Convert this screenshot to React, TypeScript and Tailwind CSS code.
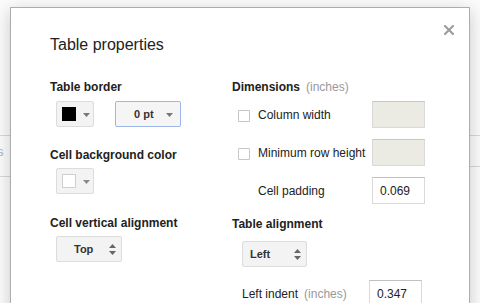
import React from "react";

const font = { fontFamily: '"Liberation Sans", Arial, sans-serif' };

function DownArrow({ color = "#777" }: { color?: string }) {
  return (
    <svg width="7" height="4" viewBox="0 0 7 4">
      <polygon points="0,0 7,0 3.5,4" fill={color} />
    </svg>
  );
}

function Spinner() {
  return (
    <svg width="7" height="11" viewBox="0 0 7 11">
      <polygon points="0,4 3.5,0 7,4" fill="#666" />
      <polygon points="0,7 7,7 3.5,11" fill="#666" />
    </svg>
  );
}

function SelectButton({
  label,
  pl,
  w,
}: {
  label: string;
  pl: string;
  w: string;
}) {
  return (
    <div
      className={`flex h-[26px] items-center justify-between rounded-[2px] border border-[#dcdcdc] bg-[#f3f3f3] pr-[5px] text-[11px] font-bold text-[#333] ${pl} ${w}`}
    >
      <span>{label}</span>
      <Spinner />
    </div>
  );
}

export default function App() {
  return (
    <div
      className="relative h-[303px] w-[480px] overflow-hidden bg-[#fbfbfb]"
      style={font}
    >
      {/* background page behind the dialog */}
      <div className="absolute left-0 top-[135px] h-px w-full bg-[#d8d8d8]" />
      <div className="absolute left-0 top-[176px] h-px w-[12px] bg-[#d8d8d8]" />
      <div className="absolute right-0 top-[166px] h-px w-[12px] bg-[#d8d8d8]" />
      <span className="absolute left-[-3px] top-[144px] text-[13px] leading-[15px] text-[#aab4c4]">
        s
      </span>

      {/* dialog */}
      <div className="absolute left-[10px] top-[7px] h-[320px] w-[460px] border border-[#acacac] bg-white pl-[39px] pt-[27px] shadow-[0_4px_16px_rgba(0,0,0,0.2)]">
        <button className="absolute right-[15px] top-[17px] flex h-[10px] w-[10px] items-center justify-center">
          <svg width="10" height="10" viewBox="0 0 10 10">
            <path
              d="M1 1 L9 9 M9 1 L1 9"
              stroke="#9a9a9a"
              strokeWidth="2"
              strokeLinecap="square"
            />
          </svg>
        </button>

        <div className="text-[16px] leading-[20px] text-[#222]">
          Table properties
        </div>

        <div className="mt-[25px] flex">
          {/* left column */}
          <div className="flex w-[182px] flex-col">
            <div className="text-[12px] font-bold leading-[15px] text-[#222]">
              Table border
            </div>
            <div className="mt-[6px] flex items-center">
              <div className="ml-[6px] flex h-[26px] w-[38px] items-center rounded-[2px] border border-[#dcdcdc] bg-[#f3f3f3] pl-[5px]">
                <div className="h-[14px] w-[14px] bg-black" />
                <div className="ml-[7px] mt-[1px]">
                  <DownArrow />
                </div>
              </div>
              <div className="ml-[21px] flex h-[26px] w-[66px] items-center justify-between rounded-[2px] border border-[#9db7ec] bg-[#f5f5f5] pl-[18px] pr-[7px] text-[11px] font-bold text-[#333]">
                <span>0 pt</span>
                <div className="mt-[1px]">
                  <DownArrow />
                </div>
              </div>
            </div>

            <div className="mt-[21px] text-[12px] font-bold leading-[15px] text-[#222]">
              Cell background color
            </div>
            <div className="ml-[6px] mt-[5px] flex h-[26px] w-[38px] items-center rounded-[2px] border border-[#dcdcdc] bg-[#f3f3f3] pl-[5px]">
              <div className="h-[14px] w-[14px] border border-[#cfcfcf] bg-white" />
              <div className="ml-[7px] mt-[1px]">
                <DownArrow color="#8a8a8a" />
              </div>
            </div>

            <div className="mt-[22px] text-[12px] font-bold leading-[15px] text-[#222]">
              Cell vertical alignment
            </div>
            <div className="ml-[6px] mt-[5px]">
              <SelectButton label="Top" pl="pl-[17px]" w="w-[66px]" />
            </div>
          </div>

          {/* right column */}
          <div className="flex flex-col">
            <div className="text-[12px] leading-[15px] text-[#222]">
              <span className="font-bold">Dimensions</span>
              <span className="ml-[6px] text-[#999]">(inches)</span>
            </div>

            <div className="mt-[6px] flex h-[27px] items-center">
              <div className="flex w-[140px] items-center pl-[6px]">
                <div className="mt-[3px] h-[12px] w-[12px] rounded-[1px] border border-[#c6c6c6] bg-white" />
                <span className="ml-[8px] text-[12px] text-[#222]">
                  Column width
                </span>
              </div>
              <div className="h-[27px] w-[53px] border border-[#d9d9d9] border-t-[#c8c8c8] bg-[#ebebe4]" />
            </div>

            <div className="mt-[11px] flex h-[27px] items-center">
              <div className="flex w-[140px] items-center pl-[6px]">
                <div className="mt-[2px] h-[12px] w-[12px] rounded-[1px] border border-[#c6c6c6] bg-white" />
                <span className="ml-[8px] text-[12px] text-[#222]">
                  Minimum row height
                </span>
              </div>
              <div className="h-[27px] w-[53px] border border-[#d9d9d9] border-t-[#c8c8c8] bg-[#ebebe4]" />
            </div>

            <div className="mt-[11px] flex h-[27px] items-center">
              <div className="flex w-[140px] items-center pl-[26px]">
                <span className="text-[12px] text-[#222]">Cell padding</span>
              </div>
              <div className="flex h-[27px] w-[53px] items-center border border-[#d9d9d9] border-t-[#c0c0c0] bg-white pl-[7px] text-[12px] text-[#222]">
                0.069
              </div>
            </div>

            <div className="mt-[13px] text-[12px] font-bold leading-[15px] text-[#222]">
              Table alignment
            </div>
            <div className="ml-[10px] mt-[9px]">
              <SelectButton label="Left" pl="pl-[7px]" w="w-[65px]" />
            </div>

            <div className="mt-[13px] flex h-[27px] items-center">
              <div className="flex w-[137px] items-center pl-[10px] text-[12px]">
                <span className="text-[#222]">Left indent</span>
                <span className="ml-[6px] text-[#999]">(inches)</span>
              </div>
              <div className="flex h-[27px] w-[53px] items-center border border-[#d9d9d9] border-t-[#c0c0c0] bg-white pl-[7px] text-[12px] text-[#222]">
                0.347
              </div>
            </div>
          </div>
        </div>
      </div>
    </div>
  );
}
